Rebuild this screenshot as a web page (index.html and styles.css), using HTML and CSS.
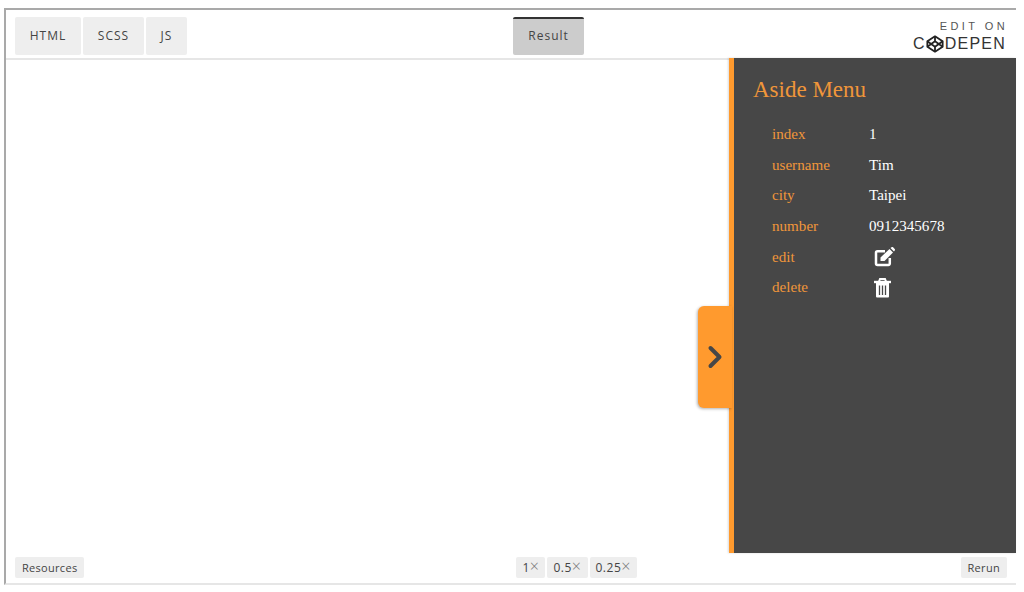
FILE: index.html
```html
<!DOCTYPE html>
<html lang="en">
<head>
    <meta charset="UTF-8" />
    <title>Aside Menu</title>
    <link rel="stylesheet" href="styles.css">
</head>
<body>
    <div class="frame">
        <header class="topbar">
            <nav class="tabs">
                <a class="tab tab-html">HTML</a>
                <a class="tab tab-scss">SCSS</a>
                <a class="tab tab-js">JS</a>
            </nav>
            <a class="tab tab-result">Result</a>
            <div class="edit-on">
                <span class="edit-label">EDIT ON</span>
                <span class="brand">C<svg class="brand-mark" viewBox="0 0 20 20" fill="none" stroke="#222" stroke-width="2" stroke-linejoin="round"><path d="M10 1.500 18.500 7v6L10 18.500 1.500 13V7z"/><path d="M10 1.500V7M10 13v5.500M1.500 7 10 13l8.500-6M1.500 13 10 7l8.500 6"/></svg>DEPEN</span>
            </div>
        </header>

        <main class="result">
            <div class="canvas"></div>
            <aside class="aside">
                <button class="aside-toggle" aria-label="Toggle menu">
                    <svg viewBox="0 0 16 24" width="16" height="24" fill="none" stroke="#474747" stroke-width="4" stroke-linecap="round" stroke-linejoin="round"><path d="M3.500 3 12.500 12 3.500 21"/></svg>
                </button>
                <h2>Aside Menu</h2>
                <dl class="details">
                    <dt>index</dt><dd>1</dd>
                    <dt>username</dt><dd>Tim</dd>
                    <dt>city</dt><dd>Taipei</dd>
                    <dt>number</dt><dd>0912345678</dd>
                    <dt>edit</dt>
                    <dd class="icon-cell">
                        <svg width="21" height="20" viewBox="0 0 21 20" fill="none"><path d="M11 4.200H3.500A1.500 1.500 0 0 0 2 5.700v10.800A1.500 1.500 0 0 0 3.500 18h10.800a1.500 1.500 0 0 0 1.500-1.500V11" stroke="#fff" stroke-width="2.500"/><path d="M6.500 10.500 15.500 2l3.500 3.500-8.500 8.500h-4z" fill="#fff"/><path d="M16.500 1 17.500.3a1.200 1.200 0 0 1 1.600 0L20.700 2a1.200 1.200 0 0 1 0 1.600L20 4.500z" fill="#fff"/></svg>
                    </dd>
                    <dt>delete</dt>
                    <dd class="icon-cell">
                        <svg width="17" height="20" viewBox="0 0 17 20" fill="none"><path d="M0 2.800h17v2.400H0z" fill="#fff"/><path d="M5 3.500 6 1h5l1 2.500" stroke="#fff" stroke-width="2"/><path d="M2 5h13v13.500a1 1 0 0 1-1 1H3a1 1 0 0 1-1-1z" fill="#fff"/><path d="M5.500 7.500V17M8.500 7.500V17M11.500 7.500V17" stroke="#474747" stroke-width="1.300"/></svg>
                    </dd>
                </dl>
            </aside>
        </main>

        <footer class="bottombar">
            <a class="small-btn">Resources</a>
            <div class="zoom-group">
                <a class="small-btn zoom-btn">1<span class="times">&times;</span></a>
                <a class="small-btn zoom-btn">0.5<span class="times">&times;</span></a>
                <a class="small-btn zoom-btn">0.25<span class="times">&times;</span></a>
            </div>
            <a class="small-btn rerun">Rerun</a>
        </footer>
    </div>
</body>
</html>
```

FILE: styles.css
```css
html, body {
    margin: 0;
    height: 100%;
    background: #fff;
}
body {
    padding: 8px 8px 7px 4px;
    box-sizing: border-box;
    font-family: "Open Sans", sans-serif;
    color: #444;
}
.frame {
    height: 100%;
    box-sizing: border-box;
    display: flex;
    flex-direction: column;
    border-top: 2px solid #a9a9a9;
    border-left: 2px solid #a9a9a9;
    border-bottom: 2px solid #e6e6e6;
}

/* top bar */
.topbar {
    height: 50px;
    flex: none;
    display: flex;
    justify-content: space-between;
    align-items: flex-start;
    padding: 7px 11px 0 9px;
    box-sizing: border-box;
    border-bottom: 2px solid #e6e6e6;
}
.tabs {
    display: flex;
    gap: 2px;
}
.tab {
    display: flex;
    align-items: center;
    justify-content: center;
    height: 38px;
    box-sizing: border-box;
    padding-bottom: 1px;
    background: #eee;
    font-size: 12px;
    letter-spacing: 1px;
    color: #444;
    border-radius: 2px;
}
.tab-html { width: 66px; }
.tab-scss { width: 61px; }
.tab-js { width: 41px; }
.tab-result {
    width: 71px;
    margin-right: 3px;
    padding-bottom: 3px;
    background: #ccc;
    border-top: 2px solid #333;
    color: #444;
}
.edit-on {
    display: flex;
    flex-direction: column;
    align-items: flex-end;
    margin-top: 3px;
    color: #333;
    font-family: "Liberation Sans", sans-serif;
}
.edit-label {
    font-size: 11px;
    line-height: 13px;
    letter-spacing: 3.400px;
    margin-right: -3px;
    color: #555;
}
.brand {
    display: flex;
    align-items: center;
    font-size: 16px;
    line-height: 20px;
    letter-spacing: 1.200px;
    margin: 1px -1px 0 0;
}
.brand-mark {
    width: 18px;
    height: 18px;
    margin: 0 1px 0 0;
}

/* result area */
.result {
    flex: 1;
    min-height: 0;
    display: flex;
}
.canvas {
    flex: 1;
}
.aside {
    position: relative;
    width: 282px;
    margin-top: -2px;
    box-sizing: content-box;
    border-left: 5px solid #ff9a2e;
    background: #474747;
    padding: 0;
    font-family: "Liberation Serif", serif;
    box-shadow: -1px 0 2px rgba(0, 0, 0, 0.15);
}
.aside h2 {
    margin: 18px 0 0 19px;
    font-size: 23px;
    line-height: 28px;
    font-weight: 400;
    color: #f0963a;
}
.aside-toggle {
    position: absolute;
    left: -36px;
    top: 248px;
    width: 34px;
    height: 102px;
    padding: 0;
    border: none;
    border-radius: 6px 0 0 6px;
    background: #ff9a2e;
    box-shadow: -1px 1px 3px rgba(0, 0, 0, 0.3);
    display: flex;
    align-items: center;
    justify-content: center;
}
.details {
    margin: 15px 0 0 38px;
    display: grid;
    grid-template-columns: 97px 1fr;
    grid-auto-rows: 30.700px;
    align-items: center;
    font-size: 15.100px;
}
.details dt {
    color: #f0963a;
}
.details dd {
    margin: 0;
    color: #fff;
}
.details .icon-cell {
    display: flex;
    align-items: center;
    padding-left: 5px;
}

/* bottom bar */
.bottombar {
    height: 30px;
    flex: none;
    display: flex;
    align-items: center;
    padding: 0 9px 2px;
    box-sizing: border-box;
}
.small-btn {
    display: block;
    height: 21px;
    line-height: 21px;
    padding: 0 7px;
    background: #eee;
    border-radius: 2px;
    font-size: 11px;
    letter-spacing: 0.300px;
    color: #444;
}
.zoom-group {
    display: flex;
    gap: 2px;
    margin-left: 432px;
}
.zoom-btn {
    padding: 0 6px;
    font-size: 12px;
    letter-spacing: 0.500px;
}
.times {
    font-size: 16px;
    font-weight: 300;
    line-height: 15px;
    color: #777;
}
.rerun {
    margin-left: auto;
}
```
